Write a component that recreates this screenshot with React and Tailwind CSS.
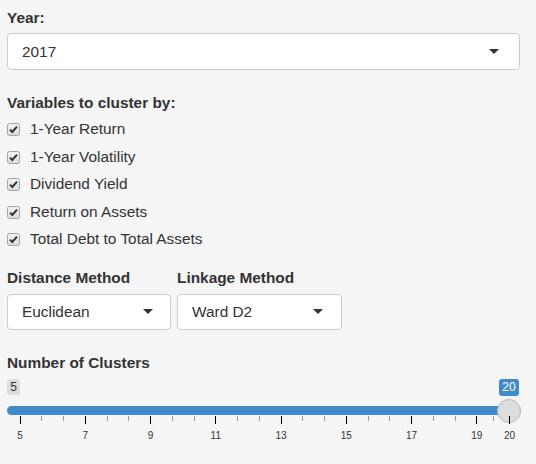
import React from "react";

const vars = ["1-Year Return", "1-Year Volatility", "Dividend Yield", "Return on Assets", "Total Debt to Total Assets"];

// slider grid: value -> x inside the slider box (box starts at page x 7)
const px = (v) => 12.5 + (v - 5) * 32.63;
const majors = [5, 7, 9, 11, 13, 15, 17, 19, 20];
const minors = [];
for (let v = 5; v < 19; v += 2) minors.push(v + 2 / 3, v + 4 / 3);
minors.push(19.5);

function Caret() {
  return (
    <svg width="10" height="5" viewBox="0 0 10 5" className="shrink-0">
      <path d="M0 0 L10 0 L5 5 Z" fill="#333" />
    </svg>
  );
}

function Select({ value, className = "", right = "pr-[20px]" }) {
  return (
    <div className={`flex items-center justify-between rounded-[4px] border border-[#cccccc] bg-white pl-[14px] ${right} ${className}`}>
      <span className="leading-[22px]">{value}</span>
      <Caret />
    </div>
  );
}

function Check() {
  return (
    <svg width="13" height="13" viewBox="0 0 13 13" className="shrink-0">
      <defs>
        <linearGradient id="cb" x1="0" y1="0" x2="0" y2="1">
          <stop offset="0" stopColor="#f2f2f2" />
          <stop offset="1" stopColor="#dcdcdc" />
        </linearGradient>
      </defs>
      <rect x="0.5" y="0.5" width="12" height="12" rx="2" fill="url(#cb)" stroke="#a5a5a5" />
      <path d="M3 6.6 L5.3 9 L10 3.6" fill="none" stroke="#333" strokeWidth="2" />
    </svg>
  );
}

export default function App() {
  return (
    <div className="h-[464px] w-[536px] bg-[#f5f5f5] px-[7px] pt-[7px] text-[15.4px] text-[#333] [font-family:'Liberation_Sans',Arial,sans-serif]">
      <div className="w-[513px]">
        <p className="mb-[4px] font-bold leading-[22px]">Year:</p>
        <Select value="2017" className="h-[37px]" />

        <p className="mt-[22px] mb-[4px] font-bold leading-[22px]">Variables to cluster by:</p>
        <div className="flex flex-col">
          {vars.map((v) => (
            <div key={v} className="flex h-[27.5px] items-start gap-[10px]">
              <div className="pt-[5px]"><Check /></div>
              <span className="leading-[22px]">{v}</span>
            </div>
          ))}
        </div>

        <div className="mt-[11px] flex gap-[6px]">
          <div className="w-[164px]">
            <p className="mb-[5px] font-bold leading-[22px]">Distance Method</p>
            <Select value="Euclidean" className="h-[36px]" right="pr-[17px]" />
          </div>
          <div className="w-[165px]">
            <p className="mb-[5px] font-bold leading-[22px]">Linkage Method</p>
            <Select value="Ward D2" className="h-[36px]" right="pr-[18px]" />
          </div>
        </div>

        <p className="mt-[22px] font-bold leading-[22px]">Number of Clusters</p>

        {/* range slider */}
        <div className="mt-[5px] w-[514px]">
          <div className="flex items-start justify-between pr-[2px]">
            <span className="flex h-[16px] w-[13px] items-center justify-center rounded-[3px] bg-[#dddddd] text-[12px] text-[#333]">5</span>
            <span className="flex h-[17px] w-[20px] items-center justify-center rounded-[3px] bg-[#428bca] text-[12px] text-white">20</span>
          </div>
          <div className="mt-[3px] flex h-[24px] items-center">
            <div className="h-[9px] flex-1 rounded-l-full bg-[#428bca]" />
            <div className="-ml-[12px] h-[24px] w-[24px] rounded-full border border-[#b8b8b8] bg-[#dddddd]" />
          </div>
          <div className="relative -mt-[7px] h-[30px]">
            {minors.map((v) => (
              <span key={v} className="absolute top-0 h-[5px] w-px bg-[#999]" style={{ left: Math.round(px(v)) }} />
            ))}
            {majors.map((v) => (
              <React.Fragment key={v}>
                <span className="absolute top-0 h-[8px] w-px bg-black" style={{ left: Math.round(px(v)) }} />
                <span className="absolute top-[14px] w-[30px] -translate-x-1/2 text-center text-[10px] leading-[11px] text-[#333]" style={{ left: px(v) + 0.5 }}>{v}</span>
              </React.Fragment>
            ))}
          </div>
        </div>
      </div>
    </div>
  );
}
